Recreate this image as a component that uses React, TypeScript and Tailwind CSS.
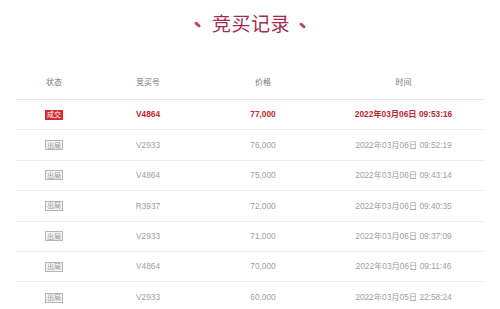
import React from 'react';

type Bid = {
  status: 'deal' | 'out';
  code: string;
  price: string;
  time: string;
};

const bids: Bid[] = [
  { status: 'deal', code: 'V4864', price: '77,000', time: '2022年03月06日 09:53:16' },
  { status: 'out', code: 'V2933', price: '76,000', time: '2022年03月06日 09:52:19' },
  { status: 'out', code: 'V4864', price: '75,000', time: '2022年03月06日 09:43:14' },
  { status: 'out', code: 'R3937', price: '72,000', time: '2022年03月06日 09:40:35' },
  { status: 'out', code: 'V2933', price: '71,000', time: '2022年03月06日 09:37:09' },
  { status: 'out', code: 'V4864', price: '70,000', time: '2022年03月06日 09:11:46' },
  { status: 'out', code: 'V2933', price: '60,000', time: '2022年03月05日 22:58:24' },
];

function StatusTag({ status }: { status: Bid['status'] }) {
  if (status === 'deal') {
    return (
      <span className="inline-flex h-[10px] w-[18px] items-center justify-center bg-[#d12b31] text-[7px] font-normal leading-none text-white">
        成交
      </span>
    );
  }
  return (
    <span className="inline-flex h-[10px] w-[18px] items-center justify-center border border-[#b5b5b5] bg-[#f4f4f4] text-[7px] leading-none text-[#999]">
      出局
    </span>
  );
}

export default function App() {
  return (
    <div className="h-[309px] w-[500px] overflow-hidden bg-white font-['Liberation_Sans','Noto_Sans_CJK_SC',sans-serif]">
      {/* 标题 */}
      <div className="mt-[12px] flex h-[24px] items-center justify-center">
        <span className="mr-[11px] mt-[1px] block h-[3px] w-[7px] rotate-[40deg] rounded-full bg-[#c2416a]" />
        <h1 className="text-[19px] leading-none tracking-[0.5px] text-[#a52d4c]">竞买记录</h1>
        <span className="ml-[9px] mt-[2px] block h-[3px] w-[7px] rotate-[40deg] rounded-full bg-[#c2416a]" />
      </div>

      {/* 表格 */}
      <div className="mx-[16px] mt-[30px] w-[469px]">
        <div className="grid h-[34px] grid-cols-[76px_112px_118px_163px] items-center border-b border-[#e6e6e6] text-center text-[8px] text-[#777]">
          <div>状态</div>
          <div>竞买号</div>
          <div>价格</div>
          <div>时间</div>
        </div>
        {bids.map((bid, i) => (
          <div
            key={i}
            className={`grid h-[30.4px] grid-cols-[76px_112px_118px_163px] items-center text-center text-[8.3px] ${
              i < bids.length - 1 ? 'border-b border-[#ececec]' : ''
            } ${bid.status === 'deal' ? 'font-bold text-[#c0282f]' : 'text-[#a0a0a0]'}`}
          >
            <div className="flex justify-center">
              <StatusTag status={bid.status} />
            </div>
            <div>{bid.code}</div>
            <div>{bid.price}</div>
            <div>{bid.time}</div>
          </div>
        ))}
      </div>
    </div>
  );
}
